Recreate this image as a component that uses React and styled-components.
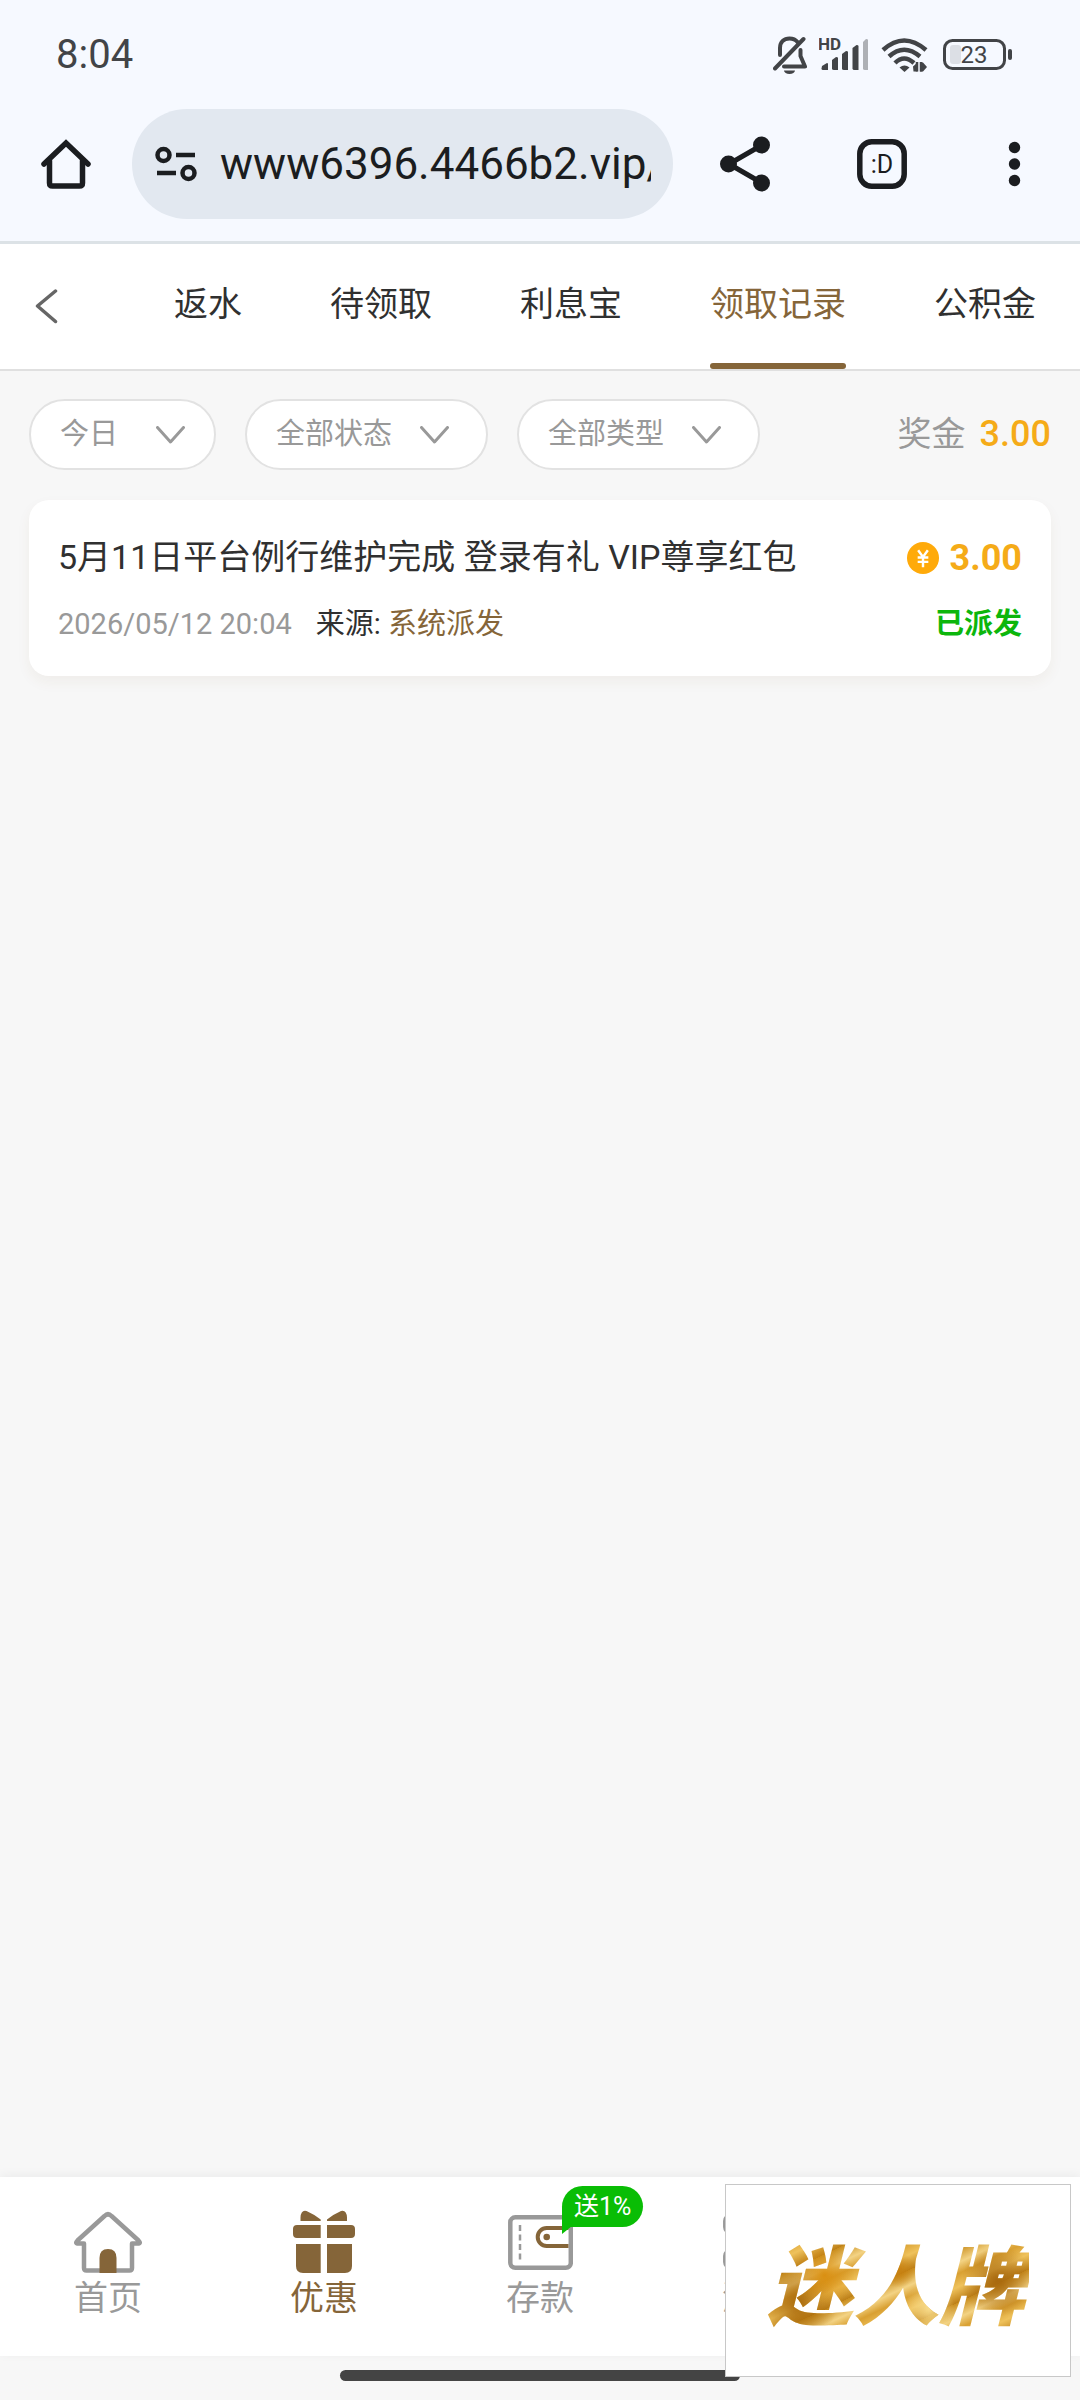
import React, { useState } from 'react';
import styled, { createGlobalStyle } from 'styled-components';

const GlobalStyle = createGlobalStyle`
    * {
        box-sizing: border-box;
    }
    body {
        margin: 0;
        background: #f7f7f7;
        color: #303030;
        font-family: Roboto, 'Noto Sans CJK SC', sans-serif;
        line-height: 1.4;
    }
    button, select, input {
        margin: 0;
        padding: 0;
        border: 0;
        background: none;
        color: inherit;
        font: inherit;
    }
    a {
        color: inherit;
        text-decoration: none;
    }
    svg {
        display: block;
        flex: none;
    }
`

const Page = styled.div`
    min-height: 100vh;
    display: flex;
    flex-direction: column;
`

const StatusBar = styled.header`
    display: flex;
    align-items: center;
    justify-content: space-between;
    height: 109px;
    padding: 0 67px 0 56px;
    background: #f6f9ff;
    color: #424447;
`

const Clock = styled.time`
    font-size: 40px;
`

const StatusIcons = styled.div`
    display: flex;
    align-items: center;
    gap: 12px;
`

const Browser = styled.div`
    display: flex;
    align-items: center;
    height: 135px;
    padding: 0 44px 22px 41px;
    background: #f6f9ff;
    border-bottom: 3px solid #dce2e6;
    color: #1b1d20;
`

const AddressBar = styled.label`
    flex: 1;
    min-width: 0;
    display: flex;
    align-items: center;
    gap: 23px;
    height: 110px;
    margin: 0 47px 0 41px;
    padding: 0 22px 0 23px;
    border-radius: 55px;
    background: #e2e8f0;
`

const AddressInput = styled.input`
    flex: 1;
    min-width: 0;
    height: 62px;
    font-size: 44px;
    outline: none;
`

const BrowserActions = styled.div`
    display: flex;
    align-items: center;
    gap: 87px;
`

const IconButton = styled.button`
    display: flex;
    cursor: pointer;
`

const TabBar = styled.nav`
    display: flex;
    align-items: stretch;
    height: 127px;
    padding-left: 35px;
    background: #fff;
    border-bottom: 2px solid #e0e0e0;
`

const Back = styled(IconButton)`
    align-items: center;
    width: 139px;
`

const Tabs = styled.div`
    display: flex;
    gap: 88px;
`

const Tab = styled.a`
    position: relative;
    display: flex;
    align-items: center;
    padding-bottom: 4px;
    font-size: 34px;
    white-space: nowrap;
    color: ${props => props.$active ? '#856539' : '#303030'};
    &::after {
        content: '';
        position: absolute;
        left: 0;
        right: 0;
        bottom: 0;
        height: 6px;
        border-radius: 3px;
        background: ${props => props.$active ? '#856539' : 'transparent'};
    }
`

const Content = styled.main`
    flex: 1;
`

const Filters = styled.div`
    display: flex;
    align-items: center;
    gap: 29px;
    padding: 28px 29px 30px;
`

const FilterPill = styled.label`
    display: flex;
    align-items: center;
    justify-content: space-between;
    width: ${props => props.$short ? '187px' : '243px'};
    height: 71px;
    padding: 0 ${props => props.$short ? '29px' : '37px'} 0 29px;
    border: 2px solid #e2e2e2;
    border-radius: 36px;
    background: #fff;
    color: #999;
`

const Select = styled.select`
    appearance: none;
    height: 44px;
    font-size: 29px;
    outline: none;
`

const Total = styled.div`
    display: flex;
    align-items: center;
    gap: 14px;
    margin-left: auto;
    font-size: 34px;
    color: #999;
    b {
        font-size: 36px;
        font-weight: 500;
        color: #f5ab18;
    }
`

const Card = styled.article`
    margin: 0 29px;
    padding: 34px 29px 32px;
    border-radius: 20px;
    background: #fff;
    box-shadow: 0 6px 14px rgba(120, 80, 40, 0.06);
`

const Row = styled.div`
    display: flex;
    align-items: center;
    justify-content: space-between;
    height: ${props => props.$tall ? '48px' : '40px'};
    margin-bottom: ${props => props.$tall ? '22px' : '0'};
`

const Title = styled.h2`
    margin: 0;
    font-size: 34px;
    font-weight: 400;
`

const Amount = styled.div`
    display: flex;
    align-items: center;
    gap: 11px;
    font-size: 36px;
    font-weight: 700;
    color: #f5ab18;
`

const Meta = styled.div`
    display: flex;
    gap: 24px;
    font-size: 29px;
    time {
        color: #999;
    }
    span span {
        color: #856539;
    }
`

const Status = styled.strong`
    font-size: 29px;
    font-weight: 700;
    color: #0cb60c;
`

const BottomNav = styled.nav`
    display: grid;
    grid-template-columns: repeat(5, 1fr);
    height: 179px;
    background: #fff;
    box-shadow: 0 -2px 10px rgba(0, 0, 0, 0.05);
`

const NavItem = styled.a`
    display: flex;
    flex-direction: column;
    align-items: center;
    padding-top: 32px;
    font-size: 34px;
    line-height: 46px;
    color: ${props => props.$active ? '#856539' : '#999'};
`

const NavIcon = styled.span`
    position: relative;
    display: flex;
`

const Badge = styled.span`
    position: absolute;
    left: 55px;
    top: -23px;
    padding: 0 12px;
    border-radius: 21px 21px 21px 0;
    background: #09bd05;
    color: #fff;
    font-size: 25px;
    line-height: 41px;
    white-space: nowrap;
    &::after {
        content: '';
        position: absolute;
        left: 0;
        top: 40px;
        border-top: 8px solid #09bd05;
        border-right: 10px solid transparent;
    }
`

const GestureArea = styled.footer`
    display: flex;
    justify-content: center;
    height: 44px;
    padding-top: 14px;
    &::after {
        content: '';
        width: 400px;
        height: 11px;
        border-radius: 6px;
        background: #444;
    }
`

const Watermark = styled.aside`
    position: fixed;
    right: 9px;
    bottom: 23px;
    display: flex;
    align-items: center;
    justify-content: center;
    width: 346px;
    height: 193px;
    border: 1px solid #c8c8c8;
    background: #fff;
`

const Brand = styled.span`
    padding-right: 4px;
    font-family: 'Noto Sans CJK SC', sans-serif;
    font-size: 86px;
    font-weight: 900;
    font-style: italic;
    line-height: 110px;
    color: transparent;
    background:
        radial-gradient(circle at 22% 45%, #d98f12 0, transparent 14%),
        radial-gradient(circle at 12% 70%, #a96a0c 0, transparent 16%),
        radial-gradient(circle at 50% 40%, #c8800f 0, transparent 12%),
        radial-gradient(circle at 62% 75%, #f8dc8c 0, transparent 14%),
        radial-gradient(circle at 88% 50%, #a8690f 0, transparent 15%),
        repeating-linear-gradient(155deg, #c98d1e 0, #f3d384 14px, #d9a032 24px, #efc25c 36px, #bd7f17 50px);
    background-clip: text;
`

const MutedBell = () => (
    <svg width="34" height="40" viewBox="1 0 34 40" fill="none" stroke="currentColor" strokeWidth="4" strokeLinecap="round" strokeLinejoin="round">
        <path d="M8 20V13C8 7 12 3.500 17.500 3.500c3 0 6 1 8 3.500M28.500 15v6l4.500 10.500H12" />
        <path d="M3 33.500 31.500 4" />
        <path d="M12 35.500h11a5.500 3.500 0 0 1-11 0z" fill="currentColor" stroke="none" />
    </svg>
)

const Signal = () => (
    <svg width="50" height="48" viewBox="0 -4 50 48" fill="currentColor">
        <text x="-1" y="15" fontSize="17" fontWeight="700" fontFamily="Roboto, sans-serif">HD</text>
        <path d="M3 31l5-3q1 0 1 1v6H4q-1.500 0-1.500-1.500z" />
        <path d="M13 25l4-3q2 0 2 1v12h-4q-2 0-2-1.500z" />
        <path d="M23 19l4-3q2 0 2 1v18h-4q-2 0-2-1.500z" />
        <path d="M33.500 13l4-3q2 0 2 1v24h-4q-2 0-2-1.500z" />
        <path d="M44 7l3-3q2 0 2 1v30h-3q-2 0-2-1.500z" opacity="0.4" />
    </svg>
)

const Wifi = () => (
    <svg width="50" height="40" viewBox="0 0 50 40" fill="none" stroke="currentColor" strokeWidth="4.500">
        <path d="M2 15Q23-4 45 15" />
        <path d="M8 21.500Q23 8 39 21.500" />
        <path d="M14 28Q23 19 33 28" />
        <path d="M18.500 32.500q5-4 10 0L23.500 37z" fill="currentColor" stroke="none" />
        <path d="M32 31.500l4.500-4v9h-4zM46 32l-4 4.500h-3v-9h3z" fill="currentColor" stroke="none" />
        <path d="M36 27v9.500M40 27v9.500" strokeWidth="2.500" />
    </svg>
)

const Battery = () => (
    <svg width="70" height="40" viewBox="0 0 70 40">
        <rect x="1.500" y="5.500" width="60" height="28" rx="8" fill="none" stroke="currentColor" strokeWidth="3" />
        <rect x="7" y="10" width="11" height="19" rx="3" fill="#dcdfe5" />
        <rect x="65" y="14" width="4" height="11" rx="2" fill="currentColor" />
        <text x="31" y="28" fontSize="24" textAnchor="middle" fill="currentColor" fontFamily="Roboto, sans-serif">23</text>
    </svg>
)

const BrowserHome = () => (
    <svg width="50" height="50" viewBox="0 0 50 50" fill="none" stroke="currentColor" strokeWidth="5.500" strokeLinejoin="round" strokeLinecap="round">
        <path d="M3 25 25 4l22 21" strokeLinejoin="miter" />
        <path d="M8.500 22v22q0 3 3 3h27q3 0 3-3V22" />
    </svg>
)

const Tune = () => (
    <svg width="42" height="36" viewBox="0 0 42 36" fill="none" stroke="currentColor" strokeWidth="4.500">
        <circle cx="8.500" cy="9" r="6" />
        <circle cx="33.500" cy="27" r="6" />
        <path d="M21 9h19M2 27h19" />
    </svg>
)

const Share = () => (
    <svg width="50" height="56" viewBox="0 0 50 56" fill="currentColor">
        <path d="M42 9 9 28l33 19" fill="none" stroke="currentColor" strokeWidth="5" />
        <circle cx="8.500" cy="28" r="8.500" />
        <circle cx="41.500" cy="9" r="8.500" />
        <circle cx="41.500" cy="47" r="8.500" />
    </svg>
)

const TabCount = () => (
    <svg width="50" height="50" viewBox="0 0 50 50">
        <rect x="2.800" y="2.800" width="44.400" height="44.400" rx="12" fill="none" stroke="currentColor" strokeWidth="5.500" />
        <text x="25" y="34" fontSize="25" textAnchor="middle" fill="currentColor" fontFamily="Roboto, sans-serif">:D</text>
    </svg>
)

const Dots = () => (
    <svg width="42" height="46" viewBox="0 0 42 46" fill="currentColor">
        <circle cx="20.500" cy="6.500" r="5.700" />
        <circle cx="20.500" cy="23" r="5.700" />
        <circle cx="20.500" cy="39.500" r="5.700" />
    </svg>
)

const Chevron = () => (
    <svg width="29" height="18" viewBox="0 0 29 18" fill="none" stroke="#999" strokeWidth="3" strokeLinecap="round" strokeLinejoin="round">
        <path d="M1.500 1.500 14.500 16 27.500 1.500" />
    </svg>
)

const BackArrow = () => (
    <svg width="23" height="36" viewBox="0 0 23 36" fill="none" stroke="#666" strokeWidth="3.500" strokeLinecap="round" strokeLinejoin="round">
        <path d="M20.500 2 2.500 17l18 15.500" />
    </svg>
)

const Coin = () => (
    <svg width="32" height="32" viewBox="0 0 33 33">
        <circle cx="16.500" cy="16.500" r="16.500" fill="#ffaa0a" />
        <path d="M11.500 8.500l5 7 5-7M16.500 15.500V26M11 16h11M11 20.500h11" fill="none" stroke="#fff" strokeWidth="2.500" />
    </svg>
)

const HomeIcon = () => (
    <svg width="68" height="66" viewBox="0 0 68 66" fill="none" stroke="#999" strokeWidth="4.500" strokeLinejoin="round">
        <path d="M30.500 7q3.500-3.500 7 0L64.500 31.500q3 3-1 3H58V59q0 2.500-2.500 2.500h-43Q10 61.500 10 59V34.500H4.500q-4 0-1-3z" />
        <path d="M25.500 64V49q0-9 8.500-9t8.500 9v15z" fill="#856539" stroke="none" />
    </svg>
)

const GiftIcon = () => (
    <svg width="64" height="66" viewBox="0 0 64 66" fill="#856539">
        <path d="M28.700 12H8.500V8.500q.5-8 6-6.500 7 3 14.200 8.500zM35 12h20V8.500q-.5-8-6-6.500-7 3-14 8.500z" />
        <path d="M28.700 16v13H5q-4 0-4-4v-5q0-4 4-4zM35 16v13h24q4 0 4-4v-5q0-4-4-4z" />
        <path d="M28.700 35v29H11q-7 0-7-7V35zM35 35v29h18q7 0 7-7V35z" />
    </svg>
)

const WalletIcon = () => (
    <svg width="66" height="66" viewBox="0 0 66 66" fill="none" stroke="#999" strokeWidth="4.500">
        <rect x="3.300" y="8.300" width="60.500" height="50.500" rx="5" />
        <path d="M13 16v36" strokeWidth="2.500" strokeDasharray="6 3.500" />
        <path d="M61.500 19H39.700a9 9 0 0 0 0 18h21.800" stroke="#856539" strokeWidth="4" />
        <circle cx="39.700" cy="28" r="3.300" fill="#856539" stroke="none" />
    </svg>
)

const GridIcon = () => (
    <svg width="66" height="66" viewBox="0 0 66 66" fill="none" stroke="#999" strokeWidth="4.500">
        <rect x="2.300" y="7" width="20" height="16" rx="5" />
        <rect x="2.300" y="42" width="20" height="16" rx="5" />
    </svg>
)

const tabs = ['返水', '待领取', '利息宝', '领取记录', '公积金']
const filters = ['今日', '全部状态', '全部类型']
const navItems = [
    { name: '首页', icon: <HomeIcon /> },
    { name: '优惠', icon: <GiftIcon /> },
    { name: '存款', icon: <WalletIcon />, badge: '送1%' },
    { name: '游戏', icon: <GridIcon /> },
]

const App = () => {
    const [url, setUrl] = useState('www6396.4466b2.vip/')
    const [tab, setTab] = useState('领取记录')

    return (
        <Page>
            <GlobalStyle />
            <StatusBar>
                <Clock>8:04</Clock>
                <StatusIcons>
                    <MutedBell />
                    <Signal />
                    <Wifi />
                    <Battery />
                </StatusIcons>
            </StatusBar>
            <Browser>
                <IconButton aria-label="Home"><BrowserHome /></IconButton>
                <AddressBar>
                    <Tune />
                    <AddressInput aria-label="URL" value={url} onChange={e => setUrl(e.target.value)} />
                </AddressBar>
                <BrowserActions>
                    <IconButton aria-label="Share"><Share /></IconButton>
                    <IconButton aria-label="Tabs"><TabCount /></IconButton>
                    <IconButton aria-label="Menu"><Dots /></IconButton>
                </BrowserActions>
            </Browser>
            <TabBar>
                <Back aria-label="返回"><BackArrow /></Back>
                <Tabs>
                    {tabs.map(name => (
                        <Tab key={name} href="#" $active={name === tab} onClick={() => setTab(name)}>{name}</Tab>
                    ))}
                </Tabs>
            </TabBar>
            <Content>
                <Filters>
                    {filters.map(name => (
                        <FilterPill key={name} $short={name.length < 3}>
                            <Select aria-label={name}>
                                <option>{name}</option>
                            </Select>
                            <Chevron />
                        </FilterPill>
                    ))}
                    <Total>奖金 <b>3.00</b></Total>
                </Filters>
                <Card>
                    <Row $tall>
                        <Title>5月11日平台例行维护完成 登录有礼 VIP尊享红包</Title>
                        <Amount><Coin />3.00</Amount>
                    </Row>
                    <Row>
                        <Meta>
                            <time>2026/05/12 20:04</time>
                            <span>来源: <span>系统派发</span></span>
                        </Meta>
                        <Status>已派发</Status>
                    </Row>
                </Card>
            </Content>
            <BottomNav>
                {navItems.map(item => (
                    <NavItem key={item.name} href="#" $active={item.name === '优惠'}>
                        <NavIcon>
                            {item.icon}
                            {item.badge && <Badge>{item.badge}</Badge>}
                        </NavIcon>
                        {item.name}
                    </NavItem>
                ))}
            </BottomNav>
            <GestureArea />
            <Watermark>
                <Brand>迷人牌</Brand>
            </Watermark>
        </Page>
    )
}

export default App;
